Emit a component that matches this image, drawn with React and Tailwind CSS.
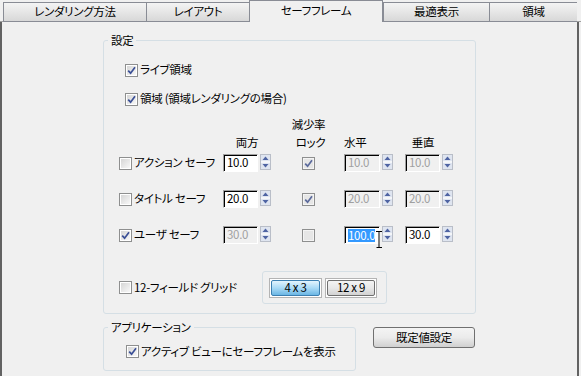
import React from 'react';

function Check({ checked, disabled }) {
  return (
    <span
      className={`w-[13px] h-[13px] shrink-0 border border-[#8e8f8f] p-[1px] flex ${
        disabled ? 'bg-[#f4f4f4]' : 'bg-white'
      }`}
    >
      <span
        className={`flex-1 flex items-center justify-center ${
          disabled ? 'bg-[#e6e6e6]' : 'bg-linear-to-br from-[#d6d6d6] to-[#f8f8f8]'
        }`}
      >
        {checked && (
          <svg width="9" height="9" viewBox="0 0 9 9">
            <path
              d="M1.2 4.6 L3.6 7.2 L8 1.2"
              fill="none"
              stroke={disabled ? '#5b6a9c' : '#3a4f96'}
              strokeWidth="1.7"
            />
          </svg>
        )}
      </span>
    </span>
  );
}

function Spin() {
  return (
    <svg width="11" height="16" viewBox="0 0 11 16" className="shrink-0">
      <rect x="0.5" y="0.5" width="10" height="15" fill="#f3f5f9" stroke="#b9bec8" />
      <rect x="1" y="1" width="9" height="6.5" fill="#dfe5f0" />
      <rect x="1" y="8.5" width="9" height="6.5" fill="#dfe5f0" />
      <line x1="1" y1="8" x2="10" y2="8" stroke="#ffffff" />
      <path d="M2.5 6 L5.5 2.5 L8.5 6 Z" fill="#4f64a3" />
      <path d="M2.5 10 L5.5 13.5 L8.5 10 Z" fill="#4f64a3" />
    </svg>
  );
}

function Num({ value, disabled, selected }) {
  return (
    <div className="flex items-start gap-[2px]">
      <div
        className={`w-[36px] h-[18px] border border-t-[#a0a0a0] border-l-[#a0a0a0] border-r-white border-b-white shadow-[inset_1px_1px_0_#000] flex items-center pl-[3px] leading-none ${
          disabled ? 'bg-[#f0f0f0] text-[#a0a0a0]' : 'bg-white text-black'
        }`}
      >
        {selected ? (
          <span className="bg-[#3399ff] text-white leading-[13px]">{value}</span>
        ) : (
          value
        )}
      </div>
      <Spin />
    </div>
  );
}

function SafeRow({ label, checked, both, bothOff, lock, lockOff, h, hOff, hSel, v, vOff }) {
  return (
    <div className="flex items-center h-[18px]">
      <div className="w-[104px] flex items-center gap-[2px]">
        <Check checked={checked} />
        <span className="whitespace-nowrap">{label}</span>
      </div>
      <div className="w-[48px]">
        <Num value={both} disabled={bothOff} />
      </div>
      <div className="w-[73px] flex justify-center pl-[2px]">
        <Check checked={lock} disabled={lockOff} />
      </div>
      <div className="w-[61px]">
        <Num value={h} disabled={hOff} selected={hSel} />
      </div>
      <div className="w-[48px]">
        <Num value={v} disabled={vOff} />
      </div>
    </div>
  );
}

const tabs = [
  { label: 'レンダリング方法', w: 'w-[143px]' },
  { label: 'レイアウト', w: 'w-[103px]' },
  { label: 'セーフフレーム', w: 'w-[134px]', active: true },
  { label: '最適表示', w: 'w-[106px]' },
  { label: '領域', w: 'w-[88px]' },
];

export default function App() {
  return (
    <div className="w-[581px] h-[376px] bg-[#f0f0f0] flex flex-col overflow-hidden relative text-[11.5px] tracking-[-0.3px] text-black [font-family:'Noto_Sans_CJK_JP','Noto_Sans',sans-serif] [font-feature-settings:'palt']">
      {/* tab strip */}
      <div className="flex items-end h-[22px] shrink-0">
        <div className="w-[3px] h-[22px] border-b border-[#a0a0a0]" />
        {tabs.map((t) =>
          t.active ? (
            <div
              key={t.label}
              className={`${t.w} h-[22px] border-l border-r border-t border-[#898c95] bg-[#f0f0f0] flex items-center justify-center leading-none pb-[1px]`}
            >
              {t.label}
            </div>
          ) : (
            <div
              key={t.label}
              className={`${t.w} h-[20px] border-l border-t border-b border-[#898c95] last:border-r bg-linear-to-b from-[#f4f4f4] to-[#d8d8d8] flex items-center justify-center leading-none`}
            >
              {t.label}
            </div>
          )
        )}
        <div className="flex-1 h-[22px] border-b border-[#a0a0a0]" />
      </div>

      {/* panel */}
      <div className="w-[579px] flex-1 border-l-2 border-r-2 border-[#626262] flex flex-col">
        <fieldset className="ml-[101px] mt-[12px] w-[373px] h-[280px] border border-[#d5dfe5] rounded-[3px] flex flex-col">
          <legend className="ml-[4px] px-[3px] leading-[12px]">設定</legend>

          <div className="ml-[21px] mt-[17px] h-[14px] flex items-center gap-[2px]">
            <Check checked />
            <span>ライブ領域</span>
          </div>
          <div className="ml-[21px] mt-[15px] h-[14px] flex items-center gap-[2px]">
            <Check checked />
            <span>領域 (領域レンダリングの場合)</span>
          </div>

          <div className="ml-[15px]">
            <div className="mt-[11px] h-[14px] flex items-center">
              <div className="w-[152px]" />
              <div className="w-[73px] text-center pl-[2px] leading-[14px]">減少率</div>
            </div>
            <div className="mt-[4px] h-[14px] flex items-center leading-[14px]">
              <div className="w-[104px]" />
              <div className="w-[48px] text-center">両方</div>
              <div className="w-[73px] text-center pl-[6px]">ロック</div>
              <div className="w-[61px] -ml-[2px] pl-[2px]">水平</div>
              <div className="w-[36px] text-center ml-[2px]">垂直</div>
            </div>

            <div className="mt-[5px]">
              <SafeRow label="アクション セーフ" both="10.0" lock lockOff h="10.0" hOff v="10.0" vOff />
            </div>
            <div className="mt-[18px]">
              <SafeRow label="タイトル セーフ" both="20.0" lock lockOff h="20.0" hOff v="20.0" vOff />
            </div>
            <div className="mt-[18px]">
              <SafeRow label="ユーザ セーフ" checked both="30.0" bothOff lockOff h="100.0" hSel v="30.0" />
            </div>

            <div className="mt-[27px] flex items-center">
              <div className="w-[143px] flex items-center gap-[2px]">
                <Check />
                <span className="whitespace-nowrap">12-フィールド グリッド</span>
              </div>
              <div className="w-[125px] h-[33px] border border-[#d5dfe5] rounded-[3px] flex items-center pl-[6px] gap-[3px]">
                <div className="border border-[#b4b4b4] bg-white p-[1px]">
                  <div className="w-[49px] h-[16px] border border-[#3c7fb1] rounded-[2px] bg-linear-to-b from-[#e3f4fd] via-[#a9daf6] to-[#6ab6e4] flex items-center justify-center leading-none">
                    4 x 3
                  </div>
                </div>
                <div className="border border-[#b4b4b4] bg-white p-[1px]">
                  <div className="w-[48px] h-[16px] border border-[#707070] rounded-[2px] bg-linear-to-b from-[#f4f4f4] via-[#e8e8e8] to-[#d2d2d2] flex items-center justify-center leading-none">
                    12 x 9
                  </div>
                </div>
              </div>
            </div>
          </div>
        </fieldset>

        <div className="flex items-start">
          <fieldset className="ml-[101px] mt-[7px] w-[253px] h-[50px] border border-[#d5dfe5] rounded-[3px] flex flex-col">
            <legend className="ml-[4px] px-[3px] leading-[12px]">アプリケーション</legend>
            <div className="ml-[22px] mt-[12px] h-[13px] flex items-center gap-[2px]">
              <Check checked />
              <span className="whitespace-nowrap">アクティブ ビューにセーフフレームを表示</span>
            </div>
          </fieldset>
          <button className="ml-[17px] mt-[13px] w-[102px] h-[21px] border border-[#707070] rounded-[3px] bg-linear-to-b from-[#f4f4f4] via-[#ebebeb] to-[#d0d0d0] flex items-center justify-center leading-none">
            既定値設定
          </button>
        </div>
      </div>

      {/* text cursor over the selected field */}
      <svg className="absolute left-[375px] top-[231px]" width="8" height="17" viewBox="0 0 8 17">
        <path d="M1 0.5 H7 M4 0.5 V16.5 M1.5 16.5 H7" stroke="#000" fill="none" />
      </svg>
    </div>
  );
}
